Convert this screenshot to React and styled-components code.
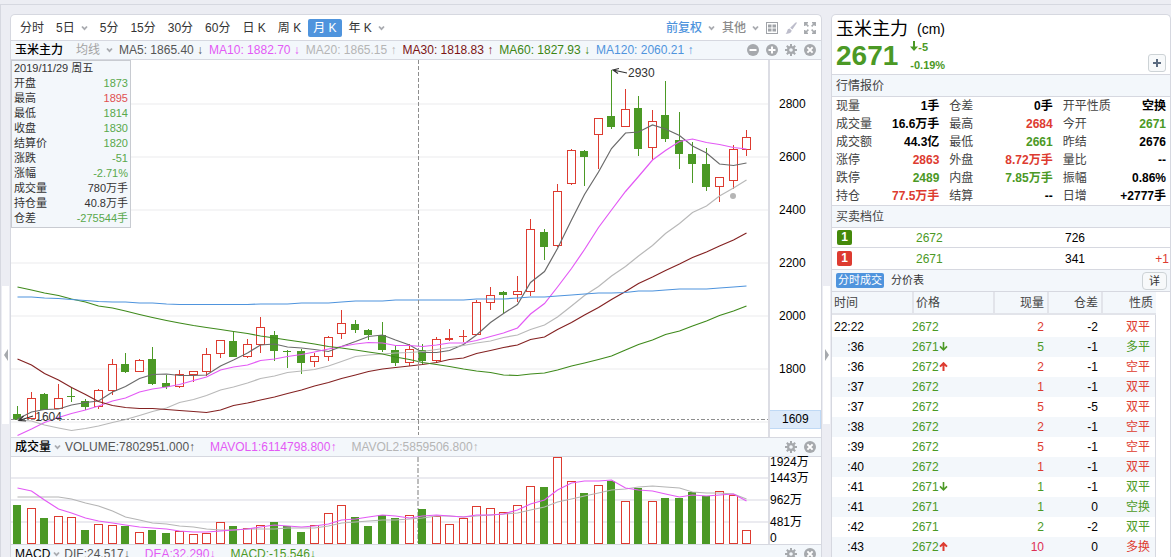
import styled, { createGlobalStyle } from "styled-components";

const GREEN = "#4b9925";
const RED = "#dd3b30";
const PINK = "#e35af5";
const GRAY = "#b5b5b5";
const BLUE = "#4f94dd";
const LINE = "#d6d8e0";

const GlobalStyle = createGlobalStyle`
  * {
    box-sizing: border-box;
  }
  body {
    margin: 0;
    background-color: #ecedf3;
    font-family: "Liberation Sans", "Noto Sans CJK SC", sans-serif;
    font-size: 12px;
    line-height: 18px;
    color: #000;
  }
  button {
    margin: 0;
    padding: 0;
    border: none;
    background: none;
    font: inherit;
    color: inherit;
    cursor: pointer;
  }
`;

const Page = styled.div`
  height: 100vh;
  padding-top: 4px;
  overflow: hidden;
`;

const Workspace = styled.div`
  display: flex;
  height: 100%;
  padding-top: 9px;
  border-top: 1px solid ${LINE};
  border-left: 1px solid ${LINE};
`;

const Rail = styled.div`
  flex: 0 0 9px;
  padding: 272px 1px 0;
`;

const Handle = styled.button`
  display: flex;
  align-items: center;
  justify-content: center;
  width: 100%;
  height: 138px;
  background-color: #fff;
`;

const Panel = styled.section`
  border: 1px solid ${LINE};
  border-bottom: none;
  border-radius: 5px 5px 0 0;
  background-color: #fff;
  overflow: hidden;
`;

const ChartPanel = styled(Panel)`
  flex: 1;
  min-width: 0;
`;

const QuotePanel = styled(Panel)`
  flex: 0 0 340px;
`;

const Toolbar = styled.div`
  display: flex;
  align-items: center;
  justify-content: space-between;
  height: 26px;
  padding: 0 5px 0 4px;
  border-bottom: 1px solid ${LINE};
`;

const Periods = styled.div`
  display: flex;
  gap: 2px;
`;

const Period = styled.button`
  display: flex;
  align-items: center;
  gap: 6px;
  height: 18px;
  padding: 0 5px;
  border-radius: 2px;
  color: ${(props) => (props.$active ? "#fff" : "#333")};
  background-color: ${(props) => (props.$active ? BLUE : "transparent")};
  white-space: nowrap;
`;

const Tools = styled.div`
  display: flex;
  align-items: center;
  gap: 7px;
`;

const Dropdown = styled.button`
  display: flex;
  align-items: center;
  gap: 6px;
  font-weight: ${(props) => (props.$strong ? 500 : 400)};
  color: ${(props) => props.$color};
`;

const IconButton = styled.button`
  display: flex;
  width: 12px;
  height: 12px;
`;

const IndicatorBar = styled.div`
  display: flex;
  align-items: center;
  gap: ${(props) => props.$gap}px;
  height: 19px;
  padding: 0 5px 0 4px;
  border-bottom: 1px solid ${LINE};
  background-color: #f3f7fb;
  white-space: nowrap;
`;

const IndicatorTitle = styled.div`
  display: flex;
  align-items: center;
  gap: 4px;
`;

const IndicatorName = styled.button`
  display: flex;
  align-items: center;
  gap: 3px;
  margin-right: ${(props) => props.$space || 0}px;
  font-weight: 500;
`;

const Indicator = styled.span`
  color: ${(props) => props.$color};
`;

const BarTools = styled(Tools)`
  margin-left: auto;
`;

const ChartRow = styled.div`
  display: flex;
  border-bottom: 1px solid ${LINE};
`;

const Plot = styled.div`
  position: relative;
  flex: 1;
  min-width: 0;
`;

const PlotSvg = styled.svg`
  display: block;
  width: 100%;
  height: ${(props) => props.$height}px;
`;

const Axis = styled.div`
  flex: 0 0 53px;
  border-left: 2px solid #dcdde4;
`;

const PriceAxis = styled(Axis)`
  padding-top: 18px;
`;

const PriceTick = styled.div`
  padding-left: 9px;
  line-height: 53px;
`;

const PriceCursor = styled.div`
  margin-top: 14px;
  padding-left: 12px;
  border: 1px solid #bfd9f5;
  border-left: none;
  background-color: #deebfa;
  line-height: 17px;
`;

const VolumeTick = styled.div`
  height: ${(props) => (props.$edge ? 10 : 22)}px;
  line-height: ${(props) => (props.$edge ? 10 : 22)}px;
  white-space: nowrap;
`;

const Mark = styled.span`
  position: absolute;
  left: ${(props) => props.$left}%;
  top: ${(props) => props.$top}%;
  line-height: 14px;
  color: #333;
`;

const HoverBox = styled.div`
  position: absolute;
  top: 0;
  left: 0;
  width: 120px;
  padding: 0 2px 1px;
  border: 1px solid #c8cbd1;
  background-color: #f3f7fb;
  font-size: 11px;
  line-height: 15px;
  color: #333;
`;

const HoverRow = styled.div`
  display: flex;
  justify-content: space-between;
`;

const HoverValue = styled.span`
  color: ${(props) => props.$color};
`;

const QuoteHeader = styled.header`
  display: flex;
  align-items: flex-end;
  justify-content: space-between;
  height: 60px;
  padding: 2px 4px;
  border-bottom: 1px solid ${LINE};
`;

const Name = styled.h1`
  display: flex;
  align-items: center;
  gap: 9px;
  margin: 0;
  font-size: 18px;
  font-weight: 400;
  line-height: 22px;
`;

const Code = styled.span`
  font-size: 14px;
`;

const PriceLine = styled.div`
  display: flex;
  align-items: center;
  gap: 12px;
  height: 32px;
  font-weight: 700;
  color: ${GREEN};
`;

const Price = styled.span`
  font-size: 28px;
  line-height: 32px;
`;

const Change = styled.div`
  display: flex;
  flex-direction: column;
  font-size: 11px;
  line-height: 18px;
`;

const AddButton = styled.button`
  display: flex;
  align-items: center;
  justify-content: center;
  width: 18px;
  height: 18px;
  border: 1px solid #cdd3d6;
  border-radius: 3px;
  background-color: #f7f9fa;
`;

const SectionTitle = styled.h2`
  margin: 0;
  padding: 2px 4px 0;
  border-bottom: 1px solid ${LINE};
  background-color: #f3f7fb;
  font-size: 12px;
  font-weight: 400;
  line-height: 19px;
  color: #444;
`;

const Quotes = styled.dl`
  display: grid;
  grid-template-columns: repeat(3, 1fr);
  column-gap: 10px;
  margin: 0;
  padding: 0 4px;
  border-bottom: 1px solid ${LINE};
`;

const Quote = styled.div`
  display: flex;
  justify-content: space-between;
  line-height: 18px;
  white-space: nowrap;
`;

const QuoteLabel = styled.dt`
  color: #444;
`;

const QuoteValue = styled.dd`
  margin: 0;
  font-weight: 700;
  color: ${(props) => props.$color};
`;

const Order = styled.div`
  display: grid;
  grid-template-columns: 79px 149px 1fr auto;
  align-items: center;
  height: ${(props) => props.$height}px;
  padding: 0 1px 0 5px;
  border-bottom: 1px solid ${LINE};
`;

const Level = styled.span`
  width: 15px;
  border-radius: 2px;
  background-color: ${(props) => props.$color};
  color: #fff;
  font-weight: 700;
  line-height: 15px;
  text-align: center;
`;

const Value = styled.span`
  color: ${(props) => props.$color};
`;

const Tabs = styled.div`
  display: flex;
  align-items: center;
  gap: 5px;
  height: 22px;
  padding: 0 3px 0 4px;
  border-bottom: 1px solid ${LINE};
  background-color: #f3f7fb;
  font-size: 11px;
  color: #333;
`;

const Tab = styled.button`
  height: 15px;
  padding: 0 2px;
  border-radius: 2px;
  line-height: 15px;
  color: ${(props) => (props.$active ? "#fff" : "#333")};
  background-color: ${(props) => (props.$active ? BLUE : "transparent")};
`;

const DetailButton = styled.button`
  width: 25px;
  height: 18px;
  margin-left: auto;
  border: 1px solid #cdd3d6;
  border-radius: 4px;
  background-color: #f7f9fa;
  line-height: 16px;
`;

const TradeArea = styled.div`
  padding-right: 14px;
`;

const Trades = styled.table`
  width: 100%;
  border-collapse: separate;
  border-spacing: 0;
  table-layout: fixed;
`;

const Th = styled.th`
  width: ${(props) => props.$width};
  height: 23px;
  padding: 0 3px 0 2px;
  border-bottom: 2px solid #e2e4ea;
  border-left: ${(props) => (props.$first ? "none" : "2px solid #e2e4ea")};
  background-color: #f3f7fb;
  font-weight: 400;
  text-align: ${(props) => (props.$left ? "left" : "right")};
  color: #444;
`;

const Spacer = styled.td`
  height: 2px;
  padding: 0;
  border-right: 1px solid ${LINE};
`;

const TradeRow = styled.tr`
  background-color: ${(props) => (props.$striped ? "#f3f7fb" : "#fff")};
`;

const Td = styled.td`
  height: 20px;
  padding: 0 ${(props) => props.$right || 3}px 0 0;
  line-height: 20px;
  text-align: ${(props) => (props.$left ? "left" : "right")};
  color: ${(props) => props.$color || "#000"};
  white-space: nowrap;

  &:last-child {
    border-right: 1px solid ${LINE};
  }
`;

const periods = [
  { label: "分时" },
  { label: "5日", menu: true },
  { label: "5分" },
  { label: "15分" },
  { label: "30分" },
  { label: "60分" },
  { label: "日 K" },
  { label: "周 K" },
  { label: "月 K", active: true },
  { label: "年 K", menu: true },
];

const averages = [
  { text: "MA5: 1865.40 ↓", color: "#555" },
  { text: "MA10: 1882.70 ↓", color: PINK },
  { text: "MA20: 1865.15 ↑", color: GRAY },
  { text: "MA30: 1818.83 ↑", color: "#7c1414" },
  { text: "MA60: 1827.93 ↓", color: "#3c8512" },
  { text: "MA120: 2060.21 ↑", color: BLUE },
];

const hoverRows = [
  ["开盘", "1873", "#59a84b"],
  ["最高", "1895", "#e05050"],
  ["最低", "1814", "#59a84b"],
  ["收盘", "1830", "#59a84b"],
  ["结算价", "1820", "#59a84b"],
  ["涨跌", "-51", "#59a84b"],
  ["涨幅", "-2.71%", "#59a84b"],
  ["成交量", "780万手", "#333"],
  ["持仓量", "40.8万手", "#333"],
  ["仓差", "-275544手", "#59a84b"],
];

// up, high, body top, body bottom, low
const candles = [
  [0, 406, 414, 420, 420], [1, 392, 398, 419, 419], [0, 393, 394, 410, 410],
  [1, 384, 398, 409, 409], [0, 387, 396, 397, 402], [0, 399, 401, 407, 410],
  [1, 389, 390, 407, 409], [1, 359, 364, 391, 395], [0, 353, 364, 372, 373],
  [1, 359, 360, 372, 372], [0, 347, 359, 384, 385], [0, 375, 383, 387, 389],
  [1, 370, 374, 387, 388], [1, 371, 371, 375, 382], [1, 348, 354, 372, 376],
  [1, 340, 340, 354, 358], [0, 332, 341, 357, 357], [1, 339, 344, 357, 358],
  [1, 317, 327, 345, 353], [0, 331, 335, 351, 361], [0, 350, 351, 352, 368],
  [0, 349, 351, 363, 374], [1, 353, 356, 362, 367], [1, 336, 337, 357, 361],
  [1, 310, 323, 334, 339], [0, 320, 324, 330, 333], [0, 329, 330, 335, 340],
  [0, 322, 335, 350, 352], [0, 345, 350, 363, 366], [1, 344, 349, 363, 366],
  [0, 344, 350, 361, 365], [1, 337, 339, 361, 363], [1, 329, 338, 340, 341],
  [1, 330, 336, 337, 342], [1, 300, 302, 335, 335], [1, 287, 295, 303, 310],
  [0, 291, 292, 295, 314], [1, 276, 291, 295, 302], [1, 219, 229, 292, 296],
  [0, 229, 232, 247, 260], [1, 184, 191, 246, 247], [1, 149, 150, 184, 185],
  [0, 150, 151, 157, 186], [1, 118, 118, 135, 169], [0, 70, 116, 127, 129],
  [1, 89, 109, 127, 127], [0, 96, 108, 149, 156], [1, 110, 121, 148, 160],
  [0, 81, 115, 139, 142], [0, 112, 140, 154, 169], [0, 142, 154, 164, 183],
  [0, 148, 164, 187, 191], [1, 177, 177, 187, 202], [1, 145, 149, 181, 189],
  [1, 130, 137, 150, 156],
];

const priceLines = [
  {
    color: "#6b6b6b",
    values: [
      419, 412, 409.5, 409, 405, 402.5, 401, 392, 386.5, 378.5, 374.5, 374,
      375.5, 375.5, 375, 366, 360, 353, 345, 344, 347, 348, 349.5, 351.5,
      346.5, 341.5, 336.5, 335, 340, 345, 352.5, 352.5, 350.5, 344.5, 335,
      322.5, 313.5, 304.5, 282.5, 271.5, 248.5, 220, 194.5, 172, 148.5, 133,
      132, 125, 129, 135.5, 146, 153, 164, 165.5, 163,
    ],
  },
  {
    color: PINK,
    values: [
      435.5, 429, 422.5, 417.5, 413.5, 410, 406, 401, 398, 392, 389, 387,
      384.5, 380.5, 377, 370, 367, 365, 360.5, 359, 356.5, 354.5, 352, 349,
      346.5, 344, 342.5, 343, 345.5, 345.5, 346.5, 345, 343, 343, 340.5,
      336.5, 333, 328, 314, 303.5, 287, 268.5, 249.5, 227.5, 210, 191.5,
      176.5, 160, 150.5, 141.5, 139, 142.5, 144.5, 147.5, 149,
    ],
  },
  {
    color: "#b9b9b9",
    values: [
      420, 421, 425, 428, 430.5, 428.5, 426, 422.5, 419.5, 415.5, 411.5, 408,
      402.5, 399.5, 395.5, 390, 387, 383, 378.5, 376, 372.5, 371, 369.5, 366,
      361.5, 356.5, 355, 354, 353, 352.5, 351.5, 349.5, 347.5, 345.5, 343,
      341, 337.5, 335, 329.5, 325, 317, 306, 295.5, 286.5, 276, 266.5, 256,
      245.5, 233.5, 223.5, 212.5, 206, 196, 188, 180,
    ],
  },
  {
    color: "#842222",
    values: [
      359, 365, 373.5, 380, 387.5, 394.5, 401.5, 405.5, 407.5, 408.5, 408.5,
      409.5, 410.5, 411.5, 412.5, 410, 405.5, 403, 400, 397, 393.5, 390, 386,
      382.5, 378.5, 375, 371.5, 369, 367.5, 366, 364.5, 362.5, 359.5, 358,
      353.5, 350.5, 347.5, 345, 339.5, 337, 329.5, 322.5, 315, 307.5, 299.5,
      291.5, 283.5, 277, 270.5, 264, 257.5, 252, 246, 240, 233,
    ],
  },
  {
    color: "#3f8a1c",
    values: [
      287, 290, 293, 295.5, 299, 302, 306, 308, 311, 314.5, 317.5, 320.5, 323,
      325.5, 327.5, 329.5, 331.5, 333.5, 336, 338, 340, 342, 344, 346.5, 348,
      350, 352, 354, 357, 359.5, 362.5, 364.5, 366.5, 369, 371, 372.5, 375,
      375.5, 374, 373, 370, 366, 363, 359.5, 356, 350, 344.5, 340, 334.5, 331,
      326, 321, 315.5, 311, 306,
    ],
  },
  {
    color: BLUE,
    values: [
      297, 297, 298, 298.5, 299.5, 300.5, 301.5, 302, 302, 303, 303, 304,
      304.5, 304.5, 304.5, 304.5, 304.5, 304.5, 304, 304, 304, 303, 303, 303,
      302, 301, 301, 301, 300, 300, 300, 300, 300, 300, 299, 299, 299, 298,
      297, 297, 296, 295, 294, 293, 293, 292.5, 291, 291, 290, 289, 289, 289,
      288, 287, 286,
    ],
  },
];

// up, bar top
const volumes = [
  [0, 505], [1, 508], [0, 518], [1, 516], [1, 517], [0, 530], [1, 524],
  [1, 525], [0, 526], [1, 532], [0, 530], [0, 533], [1, 531], [1, 534],
  [1, 533], [1, 522], [0, 526], [1, 528], [1, 525], [0, 522], [0, 526],
  [0, 532], [1, 525], [1, 513], [1, 505], [0, 517], [0, 526], [0, 515],
  [0, 518], [1, 515], [0, 509], [1, 516], [1, 524], [1, 518], [1, 506],
  [1, 508], [1, 512], [1, 505], [1, 486], [0, 487], [1, 457], [1, 481],
  [0, 493], [1, 485], [0, 481], [1, 501], [0, 488], [1, 501], [0, 498],
  [0, 498], [0, 492], [0, 496], [1, 491], [1, 495], [1, 530],
];

const volumeLines = [
  {
    color: GRAY,
    values: [
      497, 497, 497, 497, 499, 503, 506, 511, 517, 520, 523, 524, 526, 527,
      529, 530, 530, 529, 529, 529, 528, 528, 528, 526, 523, 522, 521, 520,
      520, 519, 518, 516, 516, 517, 516, 515, 514, 513, 510, 507, 502, 499,
      496, 493, 490, 489, 487, 486, 487, 488, 492, 493, 493, 494, 499,
    ],
  },
  {
    color: PINK,
    values: [
      488, 491, 500, 509, 513, 518, 521, 523, 525, 527, 528, 529, 531, 532,
      532, 531, 530, 529, 527, 525, 526, 527, 526, 524, 520, 519, 517, 515,
      516, 518, 516, 515, 516, 517, 515, 515, 514, 510, 504, 500, 490, 483,
      481, 481, 480, 488, 490, 491, 494, 497, 495, 496, 495, 494, 501,
    ],
  },
];

const quotes = [
  ["现量", "1手"], ["仓差", "0手"], ["开平性质", "空换"],
  ["成交量", "16.6万手"], ["最高", "2684", RED], ["今开", "2671", GREEN],
  ["成交额", "44.3亿"], ["最低", "2661", GREEN], ["昨结", "2676"],
  ["涨停", "2863", RED], ["外盘", "8.72万手", RED], ["量比", "--"],
  ["跌停", "2489", GREEN], ["内盘", "7.85万手", GREEN], ["振幅", "0.86%"],
  ["持仓", "77.5万手", RED], ["结算", "--"], ["日增", "+2777手"],
];

const trades = [
  ["22:22", "2672", "", "2", "-2", "双平", RED],
  [":36", "2671", "down", "5", "-1", "多平", GREEN],
  [":36", "2672", "up", "2", "-1", "空平", RED],
  [":37", "2672", "", "1", "-1", "双平", RED],
  [":37", "2672", "", "5", "-5", "双平", RED],
  [":38", "2672", "", "2", "-1", "空平", RED],
  [":39", "2672", "", "5", "-1", "空平", RED],
  [":40", "2672", "", "1", "-1", "双平", RED],
  [":41", "2671", "down", "1", "-1", "双平", GREEN],
  [":41", "2671", "", "1", "0", "空换", GREEN],
  [":42", "2671", "", "2", "-2", "双平", GREEN],
  [":43", "2672", "up", "10", "0", "多换", RED],
];

const slotX = (i) => Math.round(17 + 13.5 * i);
const toPoints = (values) =>
  values.map((y, i) => `${slotX(i) + 0.5},${y}`).join(" ");

function Chevron() {
  return (
    <svg width="7" height="6" viewBox="0 0 7 6" fill="none">
      <path d="M1 1.5 L3.5 4.2 L6 1.5" stroke="#a9abb0" strokeWidth="1.8" />
    </svg>
  );
}

function RoundIcon({ d }) {
  return (
    <svg width="12" height="12" viewBox="0 0 12 12">
      <circle cx="6" cy="6" r="6" fill="#a6a9ad" />
      <path d={d} stroke="#fff" strokeWidth="2" />
    </svg>
  );
}

function GearIcon() {
  return (
    <svg width="12" height="12" viewBox="0 0 12 12" fill="none">
      <g stroke="#a6a9ad" strokeWidth="2">
        <path d="M6 0 V12 M0 6 H12 M1.8 1.8 L10.2 10.2 M10.2 1.8 L1.8 10.2" />
      </g>
      <circle cx="6" cy="6" r="4" fill="#a6a9ad" />
      <circle cx="6" cy="6" r="1.8" fill="#f3f7fb" />
    </svg>
  );
}

function LayoutIcon() {
  return (
    <svg width="12" height="12" viewBox="0 0 12 12">
      <rect x="0.5" y="0.5" width="11" height="11" fill="none" stroke="#a0a3a8" />
      <path
        d="M2 2.5h3.5v3H2z M6.5 2.5H10v3H6.5z M2 6.5h3.5v3H2z M6.5 6.5H10v3H6.5z"
        fill="#a0a3a8"
      />
    </svg>
  );
}

function BrushIcon() {
  return (
    <svg width="12" height="12" viewBox="0 0 12 12" fill="#bdbdcb">
      <path d="M11.6 0.3 Q12 0.8 11.4 1.8 L7.4 7.6 L5.2 5.8 L10 0.9 Q11 0 11.6 0.3z" />
      <path d="M4.5 6.5 L6.7 8.4 Q6.6 10.6 4.4 11.3 Q2.2 12 0.6 11.4 Q2 10.8 2.1 9.2 Q2.4 6.8 4.5 6.5z" />
    </svg>
  );
}

function ExpandIcon() {
  return (
    <svg width="12" height="12" viewBox="0 0 12 12" fill="none">
      <path
        d="M0.8 4V0.8H4 M8 0.8h3.2V4 M11.2 8v3.2H8 M4 11.2H0.8V8 M1 1l3.4 3.4 M11 1L7.6 4.4 M11 11L7.6 7.6 M1 11l3.4-3.4"
        stroke="#a6a9ad"
        strokeWidth="1.5"
      />
    </svg>
  );
}

function TradeArrow({ dir }) {
  return (
    <svg width="9" height="9" viewBox="0 0 9 9" fill="none">
      <path
        d={dir === "up" ? "M4.5 9V1 M1 4.6L4.5 1.2L8 4.6" : "M4.5 0v8 M1 4.4l3.5 3.4L8 4.4"}
        stroke={dir === "up" ? RED : GREEN}
        strokeWidth={dir === "up" ? 2 : 1.6}
      />
    </svg>
  );
}

function CloseIcon() {
  return <RoundIcon d="M3.4 3.4 L8.6 8.6 M8.6 3.4 L3.4 8.6" />;
}

function PanelTools() {
  return (
    <BarTools>
      <IconButton aria-label="设置">
        <GearIcon />
      </IconButton>
      <IconButton aria-label="关闭">
        <CloseIcon />
      </IconButton>
    </BarTools>
  );
}

function Bar({ x, top, bottom, up }) {
  if (!up || bottom - top < 3) {
    return (
      <rect
        x={x - 4}
        y={top}
        width="8"
        height={Math.max(bottom - top, 1)}
        fill={up ? RED : GREEN}
      />
    );
  }
  return (
    <rect
      x={x - 3.5}
      y={top + 0.5}
      width="8"
      height={bottom - top - 1}
      fill="#fff"
      stroke={RED}
    />
  );
}

function PriceChart() {
  return (
    <PlotSvg $height={377} viewBox="11 60 757 377" preserveAspectRatio="none">
      {[104, 157, 210, 263, 316, 369, 422].map((y) => (
        <rect key={y} x="11" y={y - 1} width="757" height="2" fill="#f5f5f6" />
      ))}
      <g shapeRendering="crispEdges">
        {candles.map(([up, high, top, bottom, low], i) => (
          <g key={i}>
            <rect
              x={slotX(i)}
              y={high}
              width="1"
              height={low - high}
              fill={up ? RED : GREEN}
            />
            <Bar x={slotX(i)} top={top} bottom={bottom} up={up} />
          </g>
        ))}
      </g>
      {priceLines.map((line) => (
        <polyline
          key={line.color}
          points={toPoints(line.values)}
          fill="none"
          stroke={line.color}
          strokeWidth="1.2"
        />
      ))}
      <circle cx="733" cy="196" r="3" fill="#b5b5b5" />
      <path d="M418.5 60V435" stroke="#8e8e8e" strokeDasharray="4 2" />
      <path d="M11 419.5H768" stroke="#8e8e8e" strokeDasharray="4 2 2 2" />
      <path
        d="M627 73L613 70 M619 68.5L613 70L618 73.5 M33 416L19 420.5 M23.5 416L19 420.5L26 421"
        fill="none"
        stroke="#333"
        strokeWidth="1.2"
      />
    </PlotSvg>
  );
}

function VolumeChart() {
  return (
    <PlotSvg $height={87} viewBox="11 457 757 87" preserveAspectRatio="none">
      {[478, 500, 522].map((y) => (
        <rect key={y} x="11" y={y - 1} width="757" height="2" fill="#ebebf0" />
      ))}
      <path
        d="M418 457V544"
        stroke="#bdbdbd"
        strokeWidth="2"
        strokeDasharray="5 2 2 2"
      />
      <g shapeRendering="crispEdges">
        {volumes.map(([up, top], i) => (
          <Bar key={i} x={slotX(i)} top={top} bottom={544} up={up} />
        ))}
      </g>
      {volumeLines.map((line) => (
        <polyline
          key={line.color}
          points={toPoints(line.values)}
          fill="none"
          stroke={line.color}
          strokeWidth="1.2"
        />
      ))}
    </PlotSvg>
  );
}

function RailHandle({ left }) {
  return (
    <Rail>
      <Handle aria-label={left ? "收起左侧" : "收起右侧"}>
        <svg width="4" height="12" viewBox="0 0 4 12">
          <path d={left ? "M4 0V12L0 6z" : "M0 0V12L4 6z"} fill="#a6a9ad" />
        </svg>
      </Handle>
    </Rail>
  );
}

export default function App() {
  return (
    <Page>
      <GlobalStyle />
      <Workspace>
        <RailHandle left />
        <ChartPanel>
          <Toolbar>
            <Periods>
              {periods.map((p) => (
                <Period key={p.label} $active={p.active}>
                  {p.label}
                  {p.menu && <Chevron />}
                </Period>
              ))}
            </Periods>
            <Tools>
              <Dropdown $color={BLUE} $strong>
                前复权
                <Chevron />
              </Dropdown>
              <Dropdown $color="#8c8c8c" $strong>
                其他
                <Chevron />
              </Dropdown>
              <IconButton aria-label="布局">
                <LayoutIcon />
              </IconButton>
              <IconButton aria-label="画线">
                <BrushIcon />
              </IconButton>
              <IconButton aria-label="全屏">
                <ExpandIcon />
              </IconButton>
            </Tools>
          </Toolbar>

          <IndicatorBar $gap={6}>
            <IndicatorName $space={7}>玉米主力</IndicatorName>
            <Dropdown $color="#a3a3a3">
              均线
              <Chevron />
            </Dropdown>
            {averages.map((a) => (
              <Indicator key={a.text} $color={a.color}>
                {a.text}
              </Indicator>
            ))}
            <BarTools>
              <IconButton aria-label="缩小">
                <RoundIcon d="M2.5 6H9.5" />
              </IconButton>
              <IconButton aria-label="放大">
                <RoundIcon d="M2.5 6H9.5 M6 2.5V9.5" />
              </IconButton>
              <IconButton aria-label="设置">
                <GearIcon />
              </IconButton>
              <IconButton aria-label="关闭">
                <CloseIcon />
              </IconButton>
            </BarTools>
          </IndicatorBar>
          <ChartRow>
            <Plot>
              <PriceChart />
              <Mark $left={81.5} $top={1.6}>2930</Mark>
              <Mark $left={3.2} $top={92.8}>1604</Mark>
              <HoverBox>
                <div>2019/11/29 周五</div>
                {hoverRows.map(([label, value, color]) => (
                  <HoverRow key={label}>
                    <span>{label}</span>
                    <HoverValue $color={color}>{value}</HoverValue>
                  </HoverRow>
                ))}
              </HoverBox>
            </Plot>
            <PriceAxis>
              {[2800, 2600, 2400, 2200, 2000, 1800].map((p) => (
                <PriceTick key={p}>{p}</PriceTick>
              ))}
              <PriceCursor>1609</PriceCursor>
            </PriceAxis>
          </ChartRow>

          <IndicatorBar $gap={15}>
            <IndicatorTitle>
              <IndicatorName>
                成交量
                <Chevron />
              </IndicatorName>
              <Indicator $color="#555">VOLUME:7802951.000↑</Indicator>
            </IndicatorTitle>
            <Indicator $color={PINK}>MAVOL1:6114798.800↑</Indicator>
            <Indicator $color={GRAY}>MAVOL2:5859506.800↑</Indicator>
            <PanelTools />
          </IndicatorBar>
          <ChartRow>
            <Plot>
              <VolumeChart />
            </Plot>
            <Axis>
              <VolumeTick $edge>1924万</VolumeTick>
              <VolumeTick>1443万</VolumeTick>
              <VolumeTick>962万</VolumeTick>
              <VolumeTick>481万</VolumeTick>
              <VolumeTick $edge>0</VolumeTick>
            </Axis>
          </ChartRow>

          <IndicatorBar $gap={15}>
            <IndicatorTitle>
              <IndicatorName>
                MACD
                <Chevron />
              </IndicatorName>
              <Indicator $color="#555">DIF:24.517↓</Indicator>
            </IndicatorTitle>
            <Indicator $color={PINK}>DEA:32.290↓</Indicator>
            <Indicator $color={GREEN}>MACD:-15.546↓</Indicator>
            <PanelTools />
          </IndicatorBar>
        </ChartPanel>

        <RailHandle />

        <QuotePanel>
          <QuoteHeader>
            <div>
              <Name>
                玉米主力 <Code>(cm)</Code>
              </Name>
              <PriceLine>
                <Price>2671</Price>
                <Change>
                  <span>
                    <svg width="8" height="10" viewBox="0 0 8 10">
                      <path d="M3 0H5V5.5H8L4 10L0 5.5H3z" fill={GREEN} />
                    </svg>
                    -5
                  </span>
                  <span>-0.19%</span>
                </Change>
              </PriceLine>
            </div>
            <AddButton aria-label="添加自选">
              <svg width="8" height="8" viewBox="0 0 8 8">
                <path d="M4 0V8 M0 4H8" stroke="#5b6b80" strokeWidth="2" />
              </svg>
            </AddButton>
          </QuoteHeader>

          <SectionTitle>行情报价</SectionTitle>
          <Quotes>
            {quotes.map(([label, value, color]) => (
              <Quote key={label}>
                <QuoteLabel>{label}</QuoteLabel>
                <QuoteValue $color={color}>{value}</QuoteValue>
              </Quote>
            ))}
          </Quotes>

          <SectionTitle>买卖档位</SectionTitle>
          <Order $height={20}>
            <Level $color="#44890a">1</Level>
            <Value $color={GREEN}>2672</Value>
            <span>726</span>
          </Order>
          <Order $height={22}>
            <Level $color={RED}>1</Level>
            <Value $color={GREEN}>2671</Value>
            <span>341</span>
            <Value $color={RED}>+1</Value>
          </Order>

          <Tabs>
            <Tab $active>分时成交</Tab>
            <Tab>分价表</Tab>
            <DetailButton>详</DetailButton>
          </Tabs>
          <TradeArea>
            <Trades>
              <thead>
                <tr>
                  <Th $width="80px" $left $first>时间</Th>
                  <Th $width="81px" $left>价格</Th>
                  <Th $width="54px">现量</Th>
                  <Th $width="54px">仓差</Th>
                  <Th $width="55px">性质</Th>
                </tr>
              </thead>
              <tbody>
                <tr>
                  <Spacer colSpan={5} />
                </tr>
                {trades.map(([time, price, dir, amount, diff, kind, color], i) => (
                  <TradeRow key={i} $striped={i % 2 === 1}>
                    <Td $right={48}>{time}</Td>
                    <Td $left $color={GREEN}>
                      {price}
                      {dir && <TradeArrow dir={dir} />}
                    </Td>
                    <Td $color={amount === "10" ? "#dd2f55" : color}>{amount}</Td>
                    <Td>{diff}</Td>
                    <Td $right={5} $color={color}>{kind}</Td>
                  </TradeRow>
                ))}
              </tbody>
            </Trades>
          </TradeArea>
        </QuotePanel>
      </Workspace>
    </Page>
  );
}
